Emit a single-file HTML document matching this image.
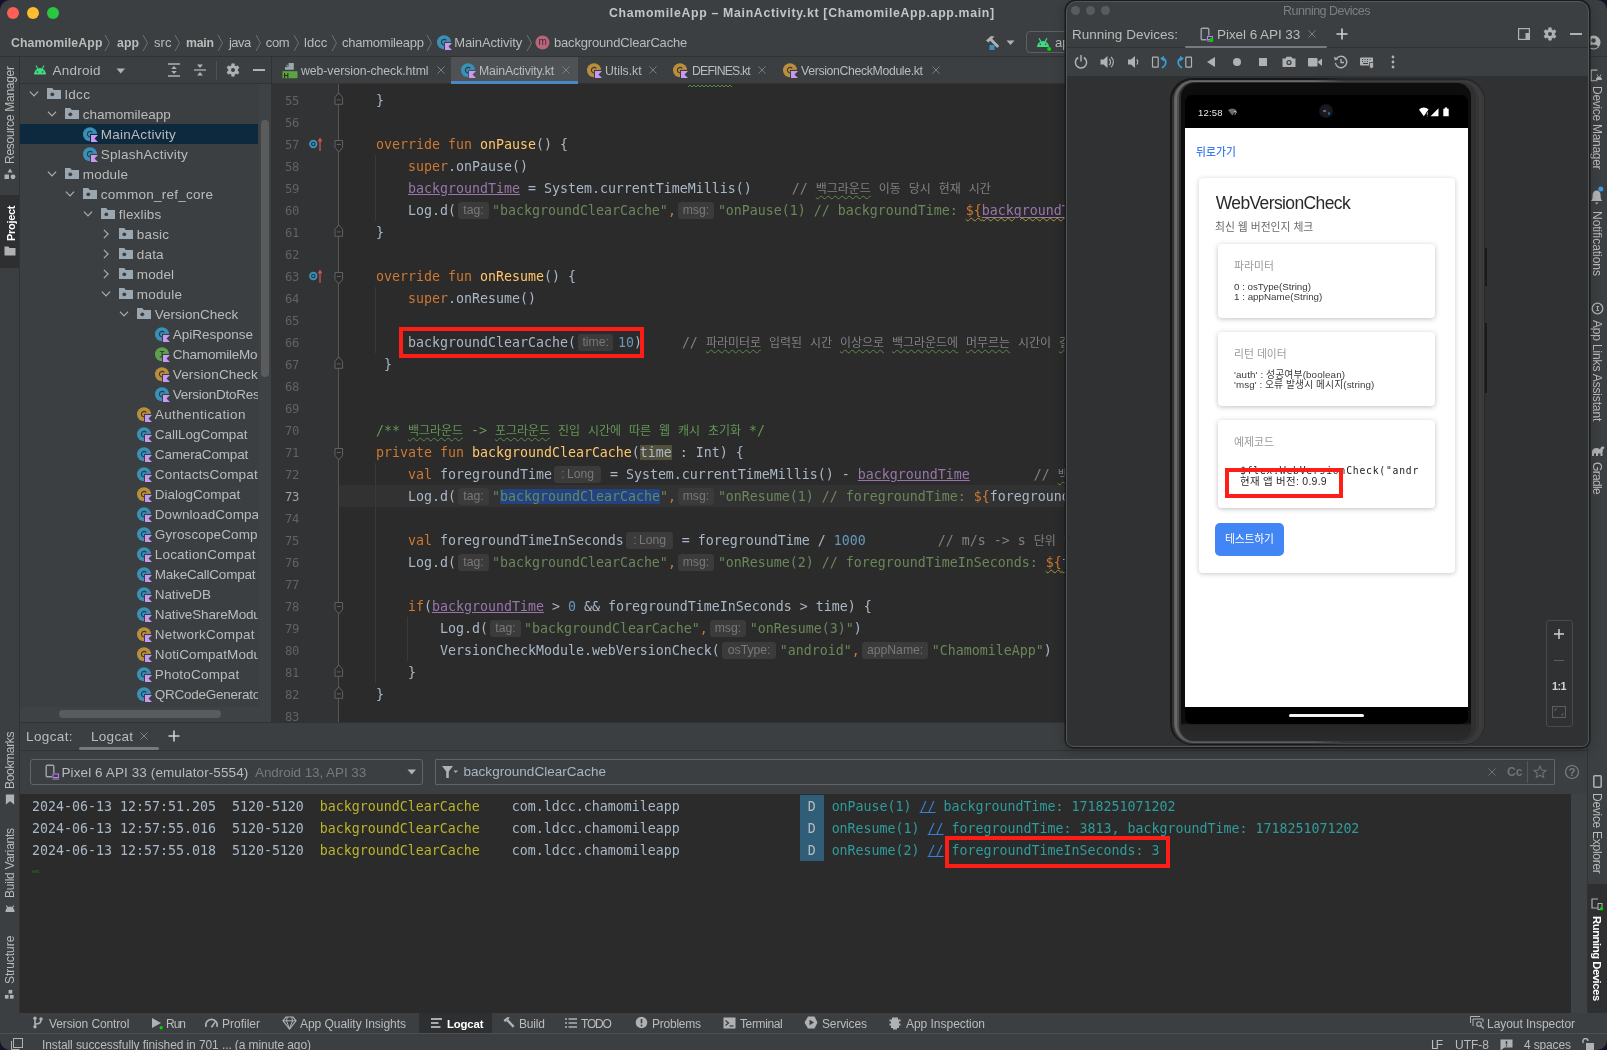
<!DOCTYPE html><html><head><meta charset="utf-8"><title>ChamomileApp</title><style>
*{box-sizing:border-box}
html,body{margin:0;padding:0}
body{width:1607px;height:1050px;overflow:hidden;background:#3c3f41;position:relative;font-family:"Liberation Sans","Noto Sans CJK KR",sans-serif;font-size:13px;color:#bbbbbb;-webkit-font-smoothing:antialiased}
.a{position:absolute}
.t{position:absolute;white-space:nowrap;line-height:16px}
.mono{font-family:"Liberation Mono","Noto Sans CJK KR",monospace}
.vt{position:absolute;white-space:nowrap;transform-origin:0 0;font-size:12px;line-height:14px}
.cl{position:absolute;left:0;white-space:pre;height:22px;line-height:22px;font-family:"DejaVu Sans Mono","Liberation Mono","Noto Sans CJK KR",monospace;font-size:13.29px;color:#a9b7c6;letter-spacing:0px}
.ln{position:absolute;width:27px;text-align:right;left:272px;height:22px;line-height:22px;font-family:"DejaVu Sans Mono","Liberation Mono",monospace;font-size:12.200px;color:#606366;letter-spacing:-0.350px}
.k{color:#cc7832}.s{color:#6a8759}.n{color:#6897bb}.f{color:#ffc66d}.c{color:#808080}.d{color:#629755}.p{color:#9876aa;text-decoration:underline}
.ko{font-size:12px;letter-spacing:-0.04px}
.h{display:inline-block;background:#3b3b3b;color:#787878;font-family:"Liberation Sans",sans-serif;font-size:12.200px;height:17px;line-height:17px;border-radius:3px;padding:0 4px;vertical-align:1px;letter-spacing:0;text-align:center}
.sq{text-decoration:underline wavy #5a8a4a;text-decoration-thickness:1px;text-underline-offset:2px}
.sqy{text-decoration:underline wavy #a89a3e;text-decoration-thickness:1px;text-underline-offset:2px}
.tr{position:absolute;white-space:nowrap;line-height:20px;height:20px;font-size:13.5px;color:#bbbbbb}
.lg{position:absolute;white-space:pre;height:22px;line-height:22px;font-family:"DejaVu Sans Mono","Liberation Mono",monospace;font-size:13.29px}
</style></head><body><div id="root" style="position:absolute;left:0;top:0;width:1607px;height:1050px;will-change:transform;overflow:hidden"><svg width="0" height="0" style="position:absolute"><defs><mask id="kmask" maskUnits="userSpaceOnUse" x="0" y="0" width="16" height="16"><rect x="0" y="0" width="16" height="16" fill="#fff"/><rect x="8" y="7.900" width="8" height="8.100" fill="#000"/></mask></defs></svg>
<div class="a" style="left:0;top:0;width:1607px;height:28px;background:#3c3f41"></div>
<div class="a" style="left:7px;top:7px;width:12px;height:12px;border-radius:6px;background:#fe5f57"></div>
<div class="a" style="left:27px;top:7px;width:12px;height:12px;border-radius:6px;background:#febc2e"></div>
<div class="a" style="left:47px;top:7px;width:12px;height:12px;border-radius:6px;background:#28c840"></div>
<div class="t" style="left:609px;top:5px;font-size:12.29px;font-weight:bold;color:#c3c5c6;letter-spacing:0.692px;">ChamomileApp – MainActivity.kt [ChamomileApp.app.main]</div>
<div class="a" style="left:0;top:56px;width:1607px;height:1px;background:#323232"></div>
<div class="t" style="left:11px;top:35px;font-size:12.29px;font-weight:bold;color:#bbbbbb;letter-spacing:0.124px;">ChamomileApp</div>
<svg class="a" style="left:103.5px;top:34px" width="7" height="18" viewBox="0 0 7 18"><path d="M1 1l4.500 8L1 17" fill="none" stroke="#6e7173" stroke-width="1"/></svg>
<div class="t" style="left:117px;top:35px;font-size:12.29px;font-weight:bold;color:#bbbbbb;letter-spacing:0.075px;">app</div>
<svg class="a" style="left:142px;top:34px" width="7" height="18" viewBox="0 0 7 18"><path d="M1 1l4.500 8L1 17" fill="none" stroke="#6e7173" stroke-width="1"/></svg>
<div class="t" style="left:154px;top:35px;font-size:13px;color:#bbbbbb;letter-spacing:0.035px;">src</div>
<svg class="a" style="left:174px;top:34px" width="7" height="18" viewBox="0 0 7 18"><path d="M1 1l4.500 8L1 17" fill="none" stroke="#6e7173" stroke-width="1"/></svg>
<div class="t" style="left:186px;top:35px;font-size:12.29px;font-weight:bold;color:#bbbbbb;letter-spacing:-0.228px;">main</div>
<svg class="a" style="left:217px;top:34px" width="7" height="18" viewBox="0 0 7 18"><path d="M1 1l4.500 8L1 17" fill="none" stroke="#6e7173" stroke-width="1"/></svg>
<div class="t" style="left:229px;top:35px;font-size:13px;color:#bbbbbb;letter-spacing:-0.516px;">java</div>
<svg class="a" style="left:254.5px;top:34px" width="7" height="18" viewBox="0 0 7 18"><path d="M1 1l4.500 8L1 17" fill="none" stroke="#6e7173" stroke-width="1"/></svg>
<div class="t" style="left:265.8px;top:35px;font-size:13px;color:#bbbbbb;letter-spacing:-0.33px;">com</div>
<svg class="a" style="left:292.5px;top:34px" width="7" height="18" viewBox="0 0 7 18"><path d="M1 1l4.500 8L1 17" fill="none" stroke="#6e7173" stroke-width="1"/></svg>
<div class="t" style="left:304px;top:35px;font-size:13px;color:#bbbbbb;letter-spacing:0.061px;">ldcc</div>
<svg class="a" style="left:330.5px;top:34px" width="7" height="18" viewBox="0 0 7 18"><path d="M1 1l4.500 8L1 17" fill="none" stroke="#6e7173" stroke-width="1"/></svg>
<div class="t" style="left:342px;top:35px;font-size:13px;color:#bbbbbb;letter-spacing:-0.231px;">chamomileapp</div>
<svg class="a" style="left:426px;top:34px" width="7" height="18" viewBox="0 0 7 18"><path d="M1 1l4.500 8L1 17" fill="none" stroke="#6e7173" stroke-width="1"/></svg>
<svg class="a" style="left:435.5px;top:34.3px" width="16" height="16" viewBox="0 0 16 16"><g mask="url(#kmask)"><circle cx="8" cy="8.200" r="7" fill="#3a90b6"/><path d="M10.300 6.300A2.800 2.800 0 1 0 10.300 10.100" fill="none" stroke="#1d2f3a" stroke-opacity="0.850" stroke-width="1.150"/></g><path d="M9 8.900h7l-3.500 3.500 3.500 3.500h-7z" fill="#c69af3"/></svg>
<div class="t" style="left:454.3px;top:35px;font-size:13px;letter-spacing:-0.132px;">MainActivity</div>
<svg class="a" style="left:525.5px;top:34px" width="7" height="18" viewBox="0 0 7 18"><path d="M1 1l4.500 8L1 17" fill="none" stroke="#6e7173" stroke-width="1"/></svg>
<svg class="a" style="left:535px;top:35px" width="15" height="15" viewBox="0 0 15 15"><circle cx="7.5" cy="7.5" r="7" fill="#ba647b"/></svg><div class="t" style="left:538.5px;top:34px;font-size:10px;color:#3c3034">m</div>
<div class="t" style="left:554px;top:35px;font-size:13px;letter-spacing:-0.173px;">backgroundClearCache</div>
<svg class="a" style="left:984px;top:34px" width="18" height="18" viewBox="0 0 18 18"><path d="M2 6.500l5-4.500 3.500 .5-2.300 2.200 7 7.300-2 2-7-7.300-1.700 1.800z" fill="#afb1b3"/><rect x="5.500" y="11" width="5" height="5" fill="#3592c4"/></svg>
<svg class="a" style="left:1006px;top:40px" width="9" height="6" viewBox="0 0 9 6"><path d="M0.500 0.500h8L4.500 5z" fill="#afb1b3"/></svg>
<div class="a" style="left:1026px;top:31px;width:80px;height:22px;border:1px solid #5e6060;border-radius:4px"></div>
<svg class="a" style="left:1036px;top:36.500px" width="16" height="14" viewBox="0 0 16 14"><path d="M1 10a6 6 0 0 1 12 0z" fill="#3ddc84"/><path d="M3 1.300l2 3.500M11 1.300l-2 3.500" stroke="#3ddc84" stroke-width="1.300"/><circle cx="4.300" cy="7.300" r="0.700" fill="#3c3f41"/><circle cx="9.700" cy="7.300" r="0.700" fill="#3c3f41"/><circle cx="13.100" cy="11.900" r="2" fill="#00e000"/></svg>
<div class="t" style="left:1055px;top:35px;font-size:13px;">ap</div>
<svg class="a" style="left:1585.800px;top:34.500px" width="15" height="15" viewBox="0 0 15 15"><circle cx="7.500" cy="7.500" r="7" fill="#afb1b3"/><circle cx="7.500" cy="5.500" r="2.300" fill="#3c3f41"/><path d="M2.800 11.500a5.500 4 0 0 1 9.400 0a6.500 6.500 0 0 1-9.400 0z" fill="#3c3f41"/></svg>
<!--NAV_END-->
<div class="a" style="left:0;top:57px;width:20px;height:955.500px;background:#3c3f41;border-right:1px solid #323232"></div>
<div class="a" style="left:0;top:195px;width:19px;height:73px;background:#2d2f30"></div>
<div class="vt" id="v_rm" style="left:3px;top:163.7px;transform:rotate(-90deg);font-size:12px;letter-spacing:-0.27px;color:#bbbbbb;">Resource Manager</div>
<svg class="a" style="left:4px;top:168px" width="12" height="12" viewBox="0 0 12 12"><path d="M6 0.500l2.500 4h-5z" fill="#afb1b3"/><rect x="0.500" y="6.500" width="4.500" height="4.500" fill="#afb1b3"/><circle cx="9" cy="8.800" r="2.400" fill="#afb1b3"/></svg>
<div class="vt" id="v_pr" style="left:3.5px;top:241px;transform:rotate(-90deg);font-size:11px;letter-spacing:-0.299px;color:#ffffff;font-weight:bold;">Project</div>
<svg class="a" style="left:4px;top:245px" width="12" height="12" viewBox="0 0 12 12"><path d="M0.500 1.500h4l1 1.500h6v7.500h-11z" fill="#afb1b3"/></svg>
<div class="vt" id="v_bm" style="left:3px;top:788.5px;transform:rotate(-90deg);font-size:12px;letter-spacing:-0.315px;color:#bbbbbb;">Bookmarks</div>
<svg class="a" style="left:5px;top:793.500px" width="10" height="11" viewBox="0 0 10 12"><path d="M0.500 0.500h9v11l-4.500-3.500-4.500 3.500z" fill="#afb1b3"/></svg>
<div class="vt" id="v_bv" style="left:3px;top:897.5px;transform:rotate(-90deg);font-size:12px;letter-spacing:-0.234px;color:#bbbbbb;">Build Variants</div>
<svg class="a" style="left:4px;top:902px" width="12" height="11" viewBox="0 0 12 12"><path d="M1 11a5 6 0 0 1 10 0z" fill="#afb1b3"/><path d="M2 4l2 3M10 4l-2 3" stroke="#afb1b3" stroke-width="1.200"/></svg>
<div class="vt" id="v_st" style="left:3px;top:983.5px;transform:rotate(-90deg);font-size:12px;letter-spacing:-0.048px;color:#bbbbbb;">Structure</div>
<svg class="a" style="left:4px;top:988.500px" width="11" height="11" viewBox="0 0 12 12"><rect x="5" y="1" width="4" height="4" fill="#afb1b3"/><rect x="1" y="6.500" width="4" height="4" fill="#afb1b3"/><rect x="6.500" y="6.500" width="4" height="4" fill="#afb1b3"/></svg>
<div class="a" style="left:20px;top:57px;width:252px;height:666px;background:#3c3f41"></div>
<svg class="a" style="left:33px;top:64px" width="14" height="12" viewBox="0 0 14 12"><path d="M1 10.500a6 6.500 0 0 1 12 0z" fill="#3ddc84"/><path d="M3 1.500l2 3.500M11 1.500l-2 3.500" stroke="#3ddc84" stroke-width="1.100"/><circle cx="4.500" cy="8" r="0.800" fill="#3c3f41"/><circle cx="9.500" cy="8" r="0.800" fill="#3c3f41"/></svg>
<div class="t" style="left:52.5px;top:62.7px;font-size:13.5px;letter-spacing:0.245px;">Android</div>
<svg class="a" style="left:116px;top:68px" width="10" height="6" viewBox="0 0 10 6"><path d="M0.500 0.500h8.500L4.750 5.500z" fill="#afb1b3"/></svg>
<svg class="a" style="left:167px;top:63px" width="14" height="14" viewBox="0 0 14 14"><path d="M1 1h12M1 13h12" stroke="#afb1b3" stroke-width="1.300"/><path d="M7 3l2.800 3h-5.600zM7 11l2.800-3h-5.600z" fill="#afb1b3"/></svg>
<svg class="a" style="left:193px;top:63px" width="14" height="14" viewBox="0 0 14 14"><path d="M1 7h12" stroke="#afb1b3" stroke-width="1.300"/><path d="M7 5l3-3.500h-6zM7 9l3 3.500h-6z" fill="#afb1b3"/></svg>
<div class="a" style="left:216px;top:61px;width:1px;height:19px;background:#4f5254"></div>
<svg class="a" style="left:226px;top:63px" width="14" height="14" viewBox="0 0 16 16"><path d="M6.36 3.06L6.57 0.94L9.43 0.94L9.64 3.06L11.46 4.12L13.40 3.23L14.83 5.71L13.09 6.95L13.09 9.05L14.83 10.29L13.40 12.77L11.46 11.88L9.64 12.94L9.43 15.06L6.57 15.06L6.36 12.94L4.54 11.88L2.60 12.77L1.17 10.29L2.91 9.05L2.91 6.95L1.17 5.71L2.60 3.23L4.54 4.12z" fill="#afb1b3" stroke="#afb1b3" stroke-width="0.8" stroke-linejoin="round"/><circle cx="8" cy="8" r="2.300" fill="#3c3f41"/></svg>
<div class="a" style="left:253px;top:69px;width:12px;height:2px;background:#afb1b3"></div>
<div class="a" style="left:20px;top:83px;width:252px;height:1px;background:#323232"></div>
<div class="a" id="tree" style="left:20px;top:84px;width:238px;height:623px;overflow:hidden">
<svg class="a" style="left:7.7px;top:4px" width="12" height="12" viewBox="0 0 12 12"><path d="M1.900 3.700L6 7.900l4.100-4.200" fill="none" stroke="#adadad" stroke-width="1.200"/></svg><svg class="a" style="left:26px;top:2px" width="16" height="16" viewBox="0 0 16 16"><path d="M1 2h5.200l1.600 2H15v9H1z" fill="#9aa7b0"/><circle cx="6.300" cy="8.300" r="1.900" fill="#3c3f41"/></svg><div class="tr" id="tr0" style="left:44.8px;top:0.7000000000000028px;letter-spacing:0.398px">ldcc</div>
<svg class="a" style="left:25.7px;top:24px" width="12" height="12" viewBox="0 0 12 12"><path d="M1.900 3.700L6 7.900l4.100-4.200" fill="none" stroke="#adadad" stroke-width="1.200"/></svg><svg class="a" style="left:44px;top:22px" width="16" height="16" viewBox="0 0 16 16"><path d="M1 2h5.200l1.600 2H15v9H1z" fill="#9aa7b0"/><circle cx="6.300" cy="8.300" r="1.900" fill="#3c3f41"/></svg><div class="tr" id="tr1" style="left:62.8px;top:20.700000000000003px;letter-spacing:0.009px">chamomileapp</div>
<div class="a" style="left:0;top:40px;width:238px;height:20px;background:#0d293e"></div><svg class="a" style="left:62px;top:42px" width="16" height="16" viewBox="0 0 16 16"><g mask="url(#kmask)"><circle cx="8" cy="8.200" r="7" fill="#3a90b6"/><path d="M10.300 6.300A2.800 2.800 0 1 0 10.300 10.100" fill="none" stroke="#1d2f3a" stroke-opacity="0.850" stroke-width="1.150"/></g><path d="M9 8.900h7l-3.500 3.500 3.500 3.500h-7z" fill="#c69af3"/></svg><div class="tr" id="tr2" style="left:80.8px;top:40.7px;letter-spacing:0.262px">MainActivity</div>
<svg class="a" style="left:62px;top:62px" width="16" height="16" viewBox="0 0 16 16"><g mask="url(#kmask)"><circle cx="8" cy="8.200" r="7" fill="#3a90b6"/><path d="M10.300 6.300A2.800 2.800 0 1 0 10.300 10.100" fill="none" stroke="#1d2f3a" stroke-opacity="0.850" stroke-width="1.150"/></g><path d="M9 8.900h7l-3.500 3.500 3.500 3.500h-7z" fill="#c69af3"/></svg><div class="tr" id="tr3" style="left:80.8px;top:60.69999999999999px;letter-spacing:0.228px">SplashActivity</div>
<svg class="a" style="left:25.7px;top:84px" width="12" height="12" viewBox="0 0 12 12"><path d="M1.900 3.700L6 7.900l4.100-4.200" fill="none" stroke="#adadad" stroke-width="1.200"/></svg><svg class="a" style="left:44px;top:82px" width="16" height="16" viewBox="0 0 16 16"><path d="M1 2h5.200l1.600 2H15v9H1z" fill="#9aa7b0"/><circle cx="6.300" cy="8.300" r="1.900" fill="#3c3f41"/></svg><div class="tr" id="tr4" style="left:62.8px;top:80.69999999999999px;letter-spacing:0.185px">module</div>
<svg class="a" style="left:43.7px;top:104px" width="12" height="12" viewBox="0 0 12 12"><path d="M1.900 3.700L6 7.900l4.100-4.200" fill="none" stroke="#adadad" stroke-width="1.200"/></svg><svg class="a" style="left:62px;top:102px" width="16" height="16" viewBox="0 0 16 16"><path d="M1 2h5.200l1.600 2H15v9H1z" fill="#9aa7b0"/><circle cx="6.300" cy="8.300" r="1.900" fill="#3c3f41"/></svg><div class="tr" id="tr5" style="left:80.8px;top:100.69999999999999px;letter-spacing:0.243px">common_ref_core</div>
<svg class="a" style="left:61.7px;top:124px" width="12" height="12" viewBox="0 0 12 12"><path d="M1.900 3.700L6 7.900l4.100-4.200" fill="none" stroke="#adadad" stroke-width="1.200"/></svg><svg class="a" style="left:80px;top:122px" width="16" height="16" viewBox="0 0 16 16"><path d="M1 2h5.200l1.600 2H15v9H1z" fill="#9aa7b0"/><circle cx="6.300" cy="8.300" r="1.900" fill="#3c3f41"/></svg><div class="tr" id="tr6" style="left:98.8px;top:120.69999999999999px;letter-spacing:0.176px">flexlibs</div>
<svg class="a" style="left:79.7px;top:144px" width="12" height="12" viewBox="0 0 12 12"><path d="M3.900 1.900L8.100 6l-4.200 4.100" fill="none" stroke="#adadad" stroke-width="1.200"/></svg><svg class="a" style="left:98px;top:142px" width="16" height="16" viewBox="0 0 16 16"><path d="M1 2h5.200l1.600 2H15v9H1z" fill="#9aa7b0"/><circle cx="6.300" cy="8.300" r="1.900" fill="#3c3f41"/></svg><div class="tr" id="tr7" style="left:116.8px;top:140.7px;letter-spacing:0.171px">basic</div>
<svg class="a" style="left:79.7px;top:164px" width="12" height="12" viewBox="0 0 12 12"><path d="M3.900 1.900L8.100 6l-4.200 4.100" fill="none" stroke="#adadad" stroke-width="1.200"/></svg><svg class="a" style="left:98px;top:162px" width="16" height="16" viewBox="0 0 16 16"><path d="M1 2h5.200l1.600 2H15v9H1z" fill="#9aa7b0"/><circle cx="6.300" cy="8.300" r="1.900" fill="#3c3f41"/></svg><div class="tr" id="tr8" style="left:116.8px;top:160.7px;letter-spacing:0.175px">data</div>
<svg class="a" style="left:79.7px;top:184px" width="12" height="12" viewBox="0 0 12 12"><path d="M3.900 1.900L8.100 6l-4.200 4.100" fill="none" stroke="#adadad" stroke-width="1.200"/></svg><svg class="a" style="left:98px;top:182px" width="16" height="16" viewBox="0 0 16 16"><path d="M1 2h5.200l1.600 2H15v9H1z" fill="#9aa7b0"/><circle cx="6.300" cy="8.300" r="1.900" fill="#3c3f41"/></svg><div class="tr" id="tr9" style="left:116.8px;top:180.7px;letter-spacing:0.108px">model</div>
<svg class="a" style="left:79.7px;top:204px" width="12" height="12" viewBox="0 0 12 12"><path d="M1.900 3.700L6 7.900l4.100-4.200" fill="none" stroke="#adadad" stroke-width="1.200"/></svg><svg class="a" style="left:98px;top:202px" width="16" height="16" viewBox="0 0 16 16"><path d="M1 2h5.200l1.600 2H15v9H1z" fill="#9aa7b0"/><circle cx="6.300" cy="8.300" r="1.900" fill="#3c3f41"/></svg><div class="tr" id="tr10" style="left:116.8px;top:200.7px;letter-spacing:0.185px">module</div>
<svg class="a" style="left:97.7px;top:224px" width="12" height="12" viewBox="0 0 12 12"><path d="M1.900 3.700L6 7.900l4.100-4.200" fill="none" stroke="#adadad" stroke-width="1.200"/></svg><svg class="a" style="left:116px;top:222px" width="16" height="16" viewBox="0 0 16 16"><path d="M1 2h5.200l1.600 2H15v9H1z" fill="#9aa7b0"/><circle cx="6.300" cy="8.300" r="1.900" fill="#3c3f41"/></svg><div class="tr" id="tr11" style="left:134.8px;top:220.7px;letter-spacing:0.015px">VersionCheck</div>
<svg class="a" style="left:134px;top:242px" width="16" height="16" viewBox="0 0 16 16"><g mask="url(#kmask)"><circle cx="8" cy="8.200" r="7" fill="#3a90b6"/><path d="M10.300 6.300A2.800 2.800 0 1 0 10.300 10.100" fill="none" stroke="#1d2f3a" stroke-opacity="0.850" stroke-width="1.150"/></g><path d="M9 8.900h7l-3.500 3.500 3.500 3.500h-7z" fill="#c69af3"/></svg><div class="tr" id="tr12" style="left:152.8px;top:240.7px;letter-spacing:-0.01px">ApiResponse</div>
<svg class="a" style="left:134px;top:262px" width="16" height="16" viewBox="0 0 16 16"><g mask="url(#kmask)"><circle cx="8" cy="8.200" r="7" fill="#5fa04e"/><path d="M5.800 5.500h4.400M8 5.500v5.500M5.800 11h4.400" fill="none" stroke="#1d3a1d" stroke-opacity="0.850" stroke-width="1.150"/></g><path d="M9 8.900h7l-3.500 3.500 3.500 3.500h-7z" fill="#c69af3"/></svg><div class="tr" id="tr13" style="left:152.8px;top:260.7px;letter-spacing:-0.232px">ChamomileModule</div>
<svg class="a" style="left:134px;top:282px" width="16" height="16" viewBox="0 0 16 16"><g mask="url(#kmask)"><circle cx="8" cy="8.200" r="7" fill="#bd8e3a"/><path d="M10.300 6.300A2.800 2.800 0 1 0 10.300 10.100" fill="none" stroke="#1d2f3a" stroke-opacity="0.850" stroke-width="1.150"/></g><path d="M9 8.900h7l-3.500 3.500 3.500 3.500h-7z" fill="#c69af3"/></svg><div class="tr" id="tr14" style="left:152.8px;top:280.7px;letter-spacing:0.151px">VersionCheckModule</div>
<svg class="a" style="left:134px;top:302px" width="16" height="16" viewBox="0 0 16 16"><g mask="url(#kmask)"><circle cx="8" cy="8.200" r="7" fill="#3a90b6"/><path d="M10.300 6.300A2.800 2.800 0 1 0 10.300 10.100" fill="none" stroke="#1d2f3a" stroke-opacity="0.850" stroke-width="1.150"/></g><path d="M9 8.900h7l-3.500 3.500 3.500 3.500h-7z" fill="#c69af3"/></svg><div class="tr" id="tr15" style="left:152.8px;top:300.7px;letter-spacing:-0.258px">VersionDtoResponse</div>
<svg class="a" style="left:116px;top:322px" width="16" height="16" viewBox="0 0 16 16"><g mask="url(#kmask)"><circle cx="8" cy="8.200" r="7" fill="#bd8e3a"/><path d="M10.300 6.300A2.800 2.800 0 1 0 10.300 10.100" fill="none" stroke="#1d2f3a" stroke-opacity="0.850" stroke-width="1.150"/></g><path d="M9 8.900h7l-3.500 3.500 3.500 3.500h-7z" fill="#c69af3"/></svg><div class="tr" id="tr16" style="left:134.8px;top:320.7px;letter-spacing:0.388px">Authentication</div>
<svg class="a" style="left:116px;top:342px" width="16" height="16" viewBox="0 0 16 16"><g mask="url(#kmask)"><circle cx="8" cy="8.200" r="7" fill="#3a90b6"/><path d="M10.300 6.300A2.800 2.800 0 1 0 10.300 10.100" fill="none" stroke="#1d2f3a" stroke-opacity="0.850" stroke-width="1.150"/></g><path d="M9 8.900h7l-3.500 3.500 3.500 3.500h-7z" fill="#c69af3"/></svg><div class="tr" id="tr17" style="left:134.8px;top:340.7px;letter-spacing:-0.021px">CallLogCompat</div>
<svg class="a" style="left:116px;top:362px" width="16" height="16" viewBox="0 0 16 16"><g mask="url(#kmask)"><circle cx="8" cy="8.200" r="7" fill="#3a90b6"/><path d="M10.300 6.300A2.800 2.800 0 1 0 10.300 10.100" fill="none" stroke="#1d2f3a" stroke-opacity="0.850" stroke-width="1.150"/></g><path d="M9 8.900h7l-3.500 3.500 3.500 3.500h-7z" fill="#c69af3"/></svg><div class="tr" id="tr18" style="left:134.8px;top:360.7px;letter-spacing:-0.162px">CameraCompat</div>
<svg class="a" style="left:116px;top:382px" width="16" height="16" viewBox="0 0 16 16"><g mask="url(#kmask)"><circle cx="8" cy="8.200" r="7" fill="#3a90b6"/><path d="M10.300 6.300A2.800 2.800 0 1 0 10.300 10.100" fill="none" stroke="#1d2f3a" stroke-opacity="0.850" stroke-width="1.150"/></g><path d="M9 8.900h7l-3.500 3.500 3.500 3.500h-7z" fill="#c69af3"/></svg><div class="tr" id="tr19" style="left:134.8px;top:380.7px;letter-spacing:0.181px">ContactsCompat</div>
<svg class="a" style="left:116px;top:402px" width="16" height="16" viewBox="0 0 16 16"><g mask="url(#kmask)"><circle cx="8" cy="8.200" r="7" fill="#bd8e3a"/><path d="M10.300 6.300A2.800 2.800 0 1 0 10.300 10.100" fill="none" stroke="#1d2f3a" stroke-opacity="0.850" stroke-width="1.150"/></g><path d="M9 8.900h7l-3.500 3.500 3.500 3.500h-7z" fill="#c69af3"/></svg><div class="tr" id="tr20" style="left:134.8px;top:400.7px;letter-spacing:-0.004px">DialogCompat</div>
<svg class="a" style="left:116px;top:422px" width="16" height="16" viewBox="0 0 16 16"><g mask="url(#kmask)"><circle cx="8" cy="8.200" r="7" fill="#3a90b6"/><path d="M10.300 6.300A2.800 2.800 0 1 0 10.300 10.100" fill="none" stroke="#1d2f3a" stroke-opacity="0.850" stroke-width="1.150"/></g><path d="M9 8.900h7l-3.500 3.500 3.500 3.500h-7z" fill="#c69af3"/></svg><div class="tr" id="tr21" style="left:134.8px;top:420.7px;letter-spacing:0.054px">DownloadCompat</div>
<svg class="a" style="left:116px;top:442px" width="16" height="16" viewBox="0 0 16 16"><g mask="url(#kmask)"><circle cx="8" cy="8.200" r="7" fill="#3a90b6"/><path d="M10.300 6.300A2.800 2.800 0 1 0 10.300 10.100" fill="none" stroke="#1d2f3a" stroke-opacity="0.850" stroke-width="1.150"/></g><path d="M9 8.900h7l-3.500 3.500 3.500 3.500h-7z" fill="#c69af3"/></svg><div class="tr" id="tr22" style="left:134.8px;top:440.70000000000005px;letter-spacing:0.118px">GyroscopeCompat</div>
<svg class="a" style="left:116px;top:462px" width="16" height="16" viewBox="0 0 16 16"><g mask="url(#kmask)"><circle cx="8" cy="8.200" r="7" fill="#3a90b6"/><path d="M10.300 6.300A2.800 2.800 0 1 0 10.300 10.100" fill="none" stroke="#1d2f3a" stroke-opacity="0.850" stroke-width="1.150"/></g><path d="M9 8.900h7l-3.500 3.500 3.500 3.500h-7z" fill="#c69af3"/></svg><div class="tr" id="tr23" style="left:134.8px;top:460.70000000000005px;letter-spacing:0.184px">LocationCompat</div>
<svg class="a" style="left:116px;top:482px" width="16" height="16" viewBox="0 0 16 16"><g mask="url(#kmask)"><circle cx="8" cy="8.200" r="7" fill="#3a90b6"/><path d="M10.300 6.300A2.800 2.800 0 1 0 10.300 10.100" fill="none" stroke="#1d2f3a" stroke-opacity="0.850" stroke-width="1.150"/></g><path d="M9 8.900h7l-3.500 3.500 3.500 3.500h-7z" fill="#c69af3"/></svg><div class="tr" id="tr24" style="left:134.8px;top:480.70000000000005px;letter-spacing:-0.218px">MakeCallCompat</div>
<svg class="a" style="left:116px;top:502px" width="16" height="16" viewBox="0 0 16 16"><g mask="url(#kmask)"><circle cx="8" cy="8.200" r="7" fill="#3a90b6"/><path d="M10.300 6.300A2.800 2.800 0 1 0 10.300 10.100" fill="none" stroke="#1d2f3a" stroke-opacity="0.850" stroke-width="1.150"/></g><path d="M9 8.900h7l-3.500 3.500 3.500 3.500h-7z" fill="#c69af3"/></svg><div class="tr" id="tr25" style="left:134.8px;top:500.70000000000005px;letter-spacing:-0.117px">NativeDB</div>
<svg class="a" style="left:116px;top:522px" width="16" height="16" viewBox="0 0 16 16"><g mask="url(#kmask)"><circle cx="8" cy="8.200" r="7" fill="#3a90b6"/><path d="M10.300 6.300A2.800 2.800 0 1 0 10.300 10.100" fill="none" stroke="#1d2f3a" stroke-opacity="0.850" stroke-width="1.150"/></g><path d="M9 8.900h7l-3.500 3.500 3.500 3.500h-7z" fill="#c69af3"/></svg><div class="tr" id="tr26" style="left:134.8px;top:520.7px;letter-spacing:-0.142px">NativeShareModule</div>
<svg class="a" style="left:116px;top:542px" width="16" height="16" viewBox="0 0 16 16"><g mask="url(#kmask)"><circle cx="8" cy="8.200" r="7" fill="#bd8e3a"/><path d="M10.300 6.300A2.800 2.800 0 1 0 10.300 10.100" fill="none" stroke="#1d2f3a" stroke-opacity="0.850" stroke-width="1.150"/></g><path d="M9 8.900h7l-3.500 3.500 3.500 3.500h-7z" fill="#c69af3"/></svg><div class="tr" id="tr27" style="left:134.8px;top:540.7px;letter-spacing:0.235px">NetworkCompat</div>
<svg class="a" style="left:116px;top:562px" width="16" height="16" viewBox="0 0 16 16"><g mask="url(#kmask)"><circle cx="8" cy="8.200" r="7" fill="#bd8e3a"/><path d="M10.300 6.300A2.800 2.800 0 1 0 10.300 10.100" fill="none" stroke="#1d2f3a" stroke-opacity="0.850" stroke-width="1.150"/></g><path d="M9 8.900h7l-3.500 3.500 3.500 3.500h-7z" fill="#c69af3"/></svg><div class="tr" id="tr28" style="left:134.8px;top:560.7px;letter-spacing:0.097px">NotiCompatModule</div>
<svg class="a" style="left:116px;top:582px" width="16" height="16" viewBox="0 0 16 16"><g mask="url(#kmask)"><circle cx="8" cy="8.200" r="7" fill="#3a90b6"/><path d="M10.300 6.300A2.800 2.800 0 1 0 10.300 10.100" fill="none" stroke="#1d2f3a" stroke-opacity="0.850" stroke-width="1.150"/></g><path d="M9 8.900h7l-3.500 3.500 3.500 3.500h-7z" fill="#c69af3"/></svg><div class="tr" id="tr29" style="left:134.8px;top:580.7px;letter-spacing:0.185px">PhotoCompat</div>
<svg class="a" style="left:116px;top:602px" width="16" height="16" viewBox="0 0 16 16"><g mask="url(#kmask)"><circle cx="8" cy="8.200" r="7" fill="#3a90b6"/><path d="M10.300 6.300A2.800 2.800 0 1 0 10.300 10.100" fill="none" stroke="#1d2f3a" stroke-opacity="0.850" stroke-width="1.150"/></g><path d="M9 8.900h7l-3.500 3.500 3.500 3.500h-7z" fill="#c69af3"/></svg><div class="tr" id="tr30" style="left:134.8px;top:600.7px;letter-spacing:-0.259px">QRCodeGenerator</div>
<svg class="a" style="left:116px;top:622px" width="16" height="16" viewBox="0 0 16 16"><g mask="url(#kmask)"><circle cx="8" cy="8.200" r="7" fill="#3a90b6"/><path d="M10.300 6.300A2.800 2.800 0 1 0 10.300 10.100" fill="none" stroke="#1d2f3a" stroke-opacity="0.850" stroke-width="1.150"/></g><path d="M9 8.900h7l-3.500 3.500 3.500 3.500h-7z" fill="#c69af3"/></svg><div class="tr" id="tr31" style="left:134.8px;top:620.7px;letter-spacing:0.1px">QRCodeScanner</div>
</div>
<div class="a" style="left:259px;top:84px;width:12px;height:623px;background:#3f4244"></div>
<div class="a" style="left:261px;top:120px;width:8px;height:257px;border-radius:4px;background:#595b5d"></div>
<div class="a" style="left:20px;top:707px;width:252px;height:16px;background:#3f4244"></div>
<div class="a" style="left:59px;top:710px;width:162px;height:8px;border-radius:4px;background:#595b5d"></div>
<div class="a" style="left:271px;top:57px;width:1px;height:666px;background:#323232"></div>
<!--PROJ_END-->
<div class="a" id="editor" style="left:272px;top:57px;width:1335px;height:666px;background:#2b2b2b;overflow:hidden"></div>
<div class="a" style="left:272px;top:57px;width:1335px;height:27px;background:#3c3f41;border-bottom:1px solid #323232"></div>
<div class="a" style="left:451px;top:57px;width:127px;height:26px;background:#4e5254"></div>
<div class="a" style="left:451px;top:80.500px;width:127px;height:3.500px;background:#4a88c7"></div>
<svg class="a" style="left:281.500px;top:62px" width="16" height="17" viewBox="0 0 16 17"><path d="M3 7.800V4.600h1.600V2.800h1.600V1h5.600v6.800z" fill="#9aa7b0"/><path d="M6.200 1v3.600H3" fill="none" stroke="#3c3f41" stroke-width="0.700"/><rect x="0.500" y="9.200" width="15" height="7" fill="#62b543" fill-opacity="0.850"/></svg><div class="t" style="left:283.500px;top:72px;font-size:7.500px;font-weight:bold;color:#1f3314;line-height:7px">H</div>
<div class="t" style="left:301px;top:62.5px;font-size:12.3px;letter-spacing:-0.076px;">web-version-check.html</div>
<svg class="a" style="left:436.5px;top:66px" width="8" height="8" viewBox="0 0 8 8"><path d="M0.500 0.500l7 7M7.500 0.500l-7 7" stroke="#7c7f81" stroke-width="1"/></svg>
<svg class="a" style="left:459.5px;top:62px" width="16" height="16" viewBox="0 0 16 16"><g mask="url(#kmask)"><circle cx="8" cy="8.200" r="7" fill="#3a90b6"/><path d="M10.300 6.300A2.800 2.800 0 1 0 10.300 10.100" fill="none" stroke="#1d2f3a" stroke-opacity="0.850" stroke-width="1.150"/></g><path d="M9 8.900h7l-3.500 3.500 3.500 3.500h-7z" fill="#c69af3"/></svg>
<div class="t" style="left:479px;top:62.5px;font-size:12.3px;letter-spacing:-0.186px;">MainActivity.kt</div>
<svg class="a" style="left:562px;top:66px" width="8" height="8" viewBox="0 0 8 8"><path d="M0.500 0.500l7 7M7.500 0.500l-7 7" stroke="#7c7f81" stroke-width="1"/></svg>
<svg class="a" style="left:585.5px;top:62px" width="16" height="16" viewBox="0 0 16 16"><g mask="url(#kmask)"><circle cx="8" cy="8.200" r="7" fill="#bd8e3a"/><path d="M10.300 6.300A2.800 2.800 0 1 0 10.300 10.100" fill="none" stroke="#1d2f3a" stroke-opacity="0.850" stroke-width="1.150"/></g><path d="M9 8.900h7l-3.500 3.500 3.500 3.500h-7z" fill="#c69af3"/></svg>
<div class="t" style="left:605px;top:62.5px;font-size:12.3px;letter-spacing:-0.043px;">Utils.kt</div>
<svg class="a" style="left:649px;top:66px" width="8" height="8" viewBox="0 0 8 8"><path d="M0.500 0.500l7 7M7.500 0.500l-7 7" stroke="#7c7f81" stroke-width="1"/></svg>
<svg class="a" style="left:672px;top:62px" width="16" height="16" viewBox="0 0 16 16"><g mask="url(#kmask)"><circle cx="8" cy="8.200" r="7" fill="#bd8e3a"/><path d="M10.300 6.300A2.800 2.800 0 1 0 10.300 10.100" fill="none" stroke="#1d2f3a" stroke-opacity="0.850" stroke-width="1.150"/></g><path d="M9 8.900h7l-3.500 3.500 3.500 3.500h-7z" fill="#c69af3"/></svg>
<div class="t" style="left:692px;top:62.5px;font-size:12.3px;letter-spacing:-0.833px;">DEFINES.kt</div>
<svg class="a" style="left:758px;top:66px" width="8" height="8" viewBox="0 0 8 8"><path d="M0.500 0.500l7 7M7.500 0.500l-7 7" stroke="#7c7f81" stroke-width="1"/></svg>
<svg class="a" style="left:781.5px;top:62px" width="16" height="16" viewBox="0 0 16 16"><g mask="url(#kmask)"><circle cx="8" cy="8.200" r="7" fill="#bd8e3a"/><path d="M10.300 6.300A2.800 2.800 0 1 0 10.300 10.100" fill="none" stroke="#1d2f3a" stroke-opacity="0.850" stroke-width="1.150"/></g><path d="M9 8.900h7l-3.500 3.500 3.500 3.500h-7z" fill="#c69af3"/></svg>
<div class="t" style="left:801px;top:62.5px;font-size:12.3px;letter-spacing:-0.36px;">VersionCheckModule.kt</div>
<svg class="a" style="left:932px;top:66px" width="8" height="8" viewBox="0 0 8 8"><path d="M0.500 0.500l7 7M7.500 0.500l-7 7" stroke="#7c7f81" stroke-width="1"/></svg>
<div class="a" style="left:272px;top:84px;width:66px;height:639px;background:#313335"></div>
<div class="a" style="left:338px;top:84px;width:1px;height:639px;background:#555555"></div>
<div class="a" style="left:339px;top:485px;width:1268px;height:22px;background:#323232"></div>
<div class="a" style="left:375px;top:155px;width:1px;height:66px;background:#3a3a3a"></div>
<div class="a" style="left:375px;top:287px;width:1px;height:66px;background:#3a3a3a"></div>
<div class="a" style="left:375px;top:463px;width:1px;height:220px;background:#3a3a3a"></div>
<div class="a" style="left:407px;top:617px;width:1px;height:44px;background:#3a3a3a"></div>
<div class="ln" style="top:90.3px;color:#606366">55</div>
<div class="ln" style="top:112.3px;color:#606366">56</div>
<div class="ln" style="top:134.3px;color:#606366">57</div>
<div class="ln" style="top:156.3px;color:#606366">58</div>
<div class="ln" style="top:178.3px;color:#606366">59</div>
<div class="ln" style="top:200.3px;color:#606366">60</div>
<div class="ln" style="top:222.3px;color:#606366">61</div>
<div class="ln" style="top:244.3px;color:#606366">62</div>
<div class="ln" style="top:266.3px;color:#606366">63</div>
<div class="ln" style="top:288.3px;color:#606366">64</div>
<div class="ln" style="top:310.3px;color:#606366">65</div>
<div class="ln" style="top:332.3px;color:#606366">66</div>
<div class="ln" style="top:354.3px;color:#606366">67</div>
<div class="ln" style="top:376.3px;color:#606366">68</div>
<div class="ln" style="top:398.3px;color:#606366">69</div>
<div class="ln" style="top:420.3px;color:#606366">70</div>
<div class="ln" style="top:442.3px;color:#606366">71</div>
<div class="ln" style="top:464.3px;color:#606366">72</div>
<div class="ln" style="top:486.3px;color:#a4a3a3">73</div>
<div class="ln" style="top:508.3px;color:#606366">74</div>
<div class="ln" style="top:530.3px;color:#606366">75</div>
<div class="ln" style="top:552.3px;color:#606366">76</div>
<div class="ln" style="top:574.3px;color:#606366">77</div>
<div class="ln" style="top:596.3px;color:#606366">78</div>
<div class="ln" style="top:618.3px;color:#606366">79</div>
<div class="ln" style="top:640.3px;color:#606366">80</div>
<div class="ln" style="top:662.3px;color:#606366">81</div>
<div class="ln" style="top:684.3px;color:#606366">82</div>
<div class="ln" style="top:706.3px;color:#606366">83</div>
<svg class="a" style="left:333.500px;top:91.7px" width="10" height="13" viewBox="0 0 10 13"><path d="M1 12.300h7.600V5.400l-3.800-4.500-3.800 4.500z" fill="#2b2b2b" stroke="#606366" stroke-width="1"/><path d="M2.800 7.900h4" stroke="#606366" stroke-width="1"/></svg>
<svg class="a" style="left:333.500px;top:139.9px" width="10" height="13" viewBox="0 0 10 13"><path d="M1 0.500h7.600v6.900l-3.800 4.500-3.800-4.500z" fill="#2b2b2b" stroke="#606366" stroke-width="1"/><path d="M2.800 4.500h4" stroke="#606366" stroke-width="1"/></svg>
<svg class="a" style="left:333.500px;top:223.7px" width="10" height="13" viewBox="0 0 10 13"><path d="M1 12.300h7.600V5.400l-3.800-4.500-3.800 4.500z" fill="#2b2b2b" stroke="#606366" stroke-width="1"/><path d="M2.800 7.900h4" stroke="#606366" stroke-width="1"/></svg>
<svg class="a" style="left:333.500px;top:271.9px" width="10" height="13" viewBox="0 0 10 13"><path d="M1 0.500h7.600v6.900l-3.800 4.500-3.800-4.500z" fill="#2b2b2b" stroke="#606366" stroke-width="1"/><path d="M2.800 4.500h4" stroke="#606366" stroke-width="1"/></svg>
<svg class="a" style="left:333.500px;top:355.7px" width="10" height="13" viewBox="0 0 10 13"><path d="M1 12.300h7.600V5.400l-3.800-4.500-3.800 4.500z" fill="#2b2b2b" stroke="#606366" stroke-width="1"/><path d="M2.800 7.900h4" stroke="#606366" stroke-width="1"/></svg>
<svg class="a" style="left:333.500px;top:447.9px" width="10" height="13" viewBox="0 0 10 13"><path d="M1 0.500h7.600v6.900l-3.800 4.500-3.800-4.500z" fill="#2b2b2b" stroke="#606366" stroke-width="1"/><path d="M2.800 4.500h4" stroke="#606366" stroke-width="1"/></svg>
<svg class="a" style="left:333.500px;top:601.9px" width="10" height="13" viewBox="0 0 10 13"><path d="M1 0.500h7.600v6.900l-3.800 4.500-3.800-4.500z" fill="#2b2b2b" stroke="#606366" stroke-width="1"/><path d="M2.800 4.500h4" stroke="#606366" stroke-width="1"/></svg>
<svg class="a" style="left:333.500px;top:663.7px" width="10" height="13" viewBox="0 0 10 13"><path d="M1 12.300h7.600V5.400l-3.800-4.500-3.800 4.500z" fill="#2b2b2b" stroke="#606366" stroke-width="1"/><path d="M2.800 7.900h4" stroke="#606366" stroke-width="1"/></svg>
<svg class="a" style="left:333.500px;top:685.7px" width="10" height="13" viewBox="0 0 10 13"><path d="M1 12.300h7.600V5.400l-3.800-4.500-3.800 4.500z" fill="#2b2b2b" stroke="#606366" stroke-width="1"/><path d="M2.800 7.900h4" stroke="#606366" stroke-width="1"/></svg>
<svg class="a" style="left:308px;top:137px" width="14" height="14" viewBox="0 0 14 14"><circle cx="5.300" cy="7" r="4.200" fill="#3a90b6"/><circle cx="5.300" cy="7" r="1.700" fill="none" stroke="#24343c" stroke-width="1.100"/><path d="M12 14V3" stroke="#d25252" stroke-width="1.300"/><path d="M9.500 4.600L12 0.500l2.500 4.100z" fill="#d25252"/></svg>
<svg class="a" style="left:308px;top:269px" width="14" height="14" viewBox="0 0 14 14"><circle cx="5.300" cy="7" r="4.200" fill="#3a90b6"/><circle cx="5.300" cy="7" r="1.700" fill="none" stroke="#24343c" stroke-width="1.100"/><path d="M12 14V3" stroke="#d25252" stroke-width="1.300"/><path d="M9.500 4.600L12 0.500l2.500 4.100z" fill="#d25252"/></svg>
<div class="a" id="code" style="left:344px;top:0;width:1263px;height:723px;overflow:hidden;clip-path:inset(84px 0 0 0)">
<div class="cl" id="L55" style="top:90.2px">    }</div>
<div class="cl" id="L57" style="top:134.2px">    <span class="k">override fun </span><span class="f">onPause</span>() {</div>
<div class="cl" id="L58" style="top:156.2px">        <span class="k">super</span>.onPause()</div>
<div class="cl" id="L59" style="top:178.2px">        <span class="p">backgroundTime</span> = System.currentTimeMillis()     <span class="c">// <span class="sq"><span class="ko">백그라운드</span></span> <span class="ko">이동</span> <span class="ko">당시</span> <span class="ko">현재</span> <span class="ko">시간</span></span></div>
<div class="cl" id="L60" style="top:200.2px">        Log.d(<span class="h" style="width:31px;margin:0 3px 0 2px;padding:0">tag:</span><span class="s">&quot;backgroundClearCache&quot;</span><span class="k">,</span><span class="h" style="width:36px;margin:0 4px 0 2px;padding:0">msg:</span><span class="s">&quot;onPause(1) // backgroundTime: </span><span class="sqy"><span class="k">${</span><span class="p">backgroundTime</span><span class="k">}</span></span><span class="s">&quot;</span>)</div>
<div class="cl" id="L61" style="top:222.2px">    }</div>
<div class="cl" id="L63" style="top:266.2px">    <span class="k">override fun </span><span class="f">onResume</span>() {</div>
<div class="cl" id="L64" style="top:288.2px">        <span class="k">super</span>.onResume()</div>
<div class="cl" id="L66" style="top:332.2px">        backgroundClearCache(<span class="h" style="width:35.5px;margin:0 4.5px 0 2px;padding:0">time:</span><span class="n">10</span>)     <span class="c">// <span class="sq"><span class="ko">파라미터로</span></span> <span class="ko">입력된</span> <span class="ko">시간</span> <span class="sq"><span class="ko">이상으로</span></span> <span class="sq"><span class="ko">백그라운드에</span></span> <span class="sq"><span class="ko">머무르는</span></span> <span class="ko">시간이</span> <span class="sq"><span class="ko">길어지면</span></span></span></div>
<div class="cl" id="L67" style="top:354.2px">     }</div>
<div class="cl" id="L70" style="top:420.2px">    <span class="d">/** <span class="sq"><span class="ko">백그라운드</span></span> -&gt; <span class="sq"><span class="ko">포그라운드</span></span> <span class="ko">진입</span> <span class="ko">시간에</span> <span class="ko">따른</span> <span class="ko">웹</span> <span class="ko">캐시</span> <span class="ko">초기화</span> */</span></div>
<div class="cl" id="L71" style="top:442.2px">    <span class="k">private fun </span><span class="f">backgroundClearCache</span>(<span style="background:#52503a">time</span> : Int) {</div>
<div class="cl" id="L72" style="top:464.2px">        <span class="k">val </span>foregroundTime<span class="h" style="width:47.5px;margin:0 0.5px 0 2px;padding:0">:&#8201;Long</span> = System.currentTimeMillis() - <span class="p">backgroundTime</span>        <span class="c">// <span class="sq"><span class="ko">백그라운드</span></span></span></div>
<div class="cl" id="L73" style="top:486.2px">        Log.d(<span class="h" style="width:31px;margin:0 3px 0 2px;padding:0">tag:</span><span class="s">&quot;<span style="background:#214283">backgroundClearCache</span>&quot;</span><span class="k">,</span><span class="h" style="width:36px;margin:0 4px 0 2px;padding:0">msg:</span><span class="s">&quot;onResume(1) // foregroundTime: </span><span class="k">${</span>foregroundTime<span class="k">}</span><span class="s">, backgroundTime</span></div>
<div class="cl" id="L75" style="top:530.2px">        <span class="k">val </span>foregroundTimeInSeconds<span class="h" style="width:47.5px;margin:0 0.5px 0 2px;padding:0">:&#8201;Long</span> = foregroundTime / <span class="n">1000</span>         <span class="c">// m/s -&gt; s <span class="ko">단위</span> <span class="ko">변환</span></span></div>
<div class="cl" id="L76" style="top:552.2px">        Log.d(<span class="h" style="width:31px;margin:0 3px 0 2px;padding:0">tag:</span><span class="s">&quot;backgroundClearCache&quot;</span><span class="k">,</span><span class="h" style="width:36px;margin:0 4px 0 2px;padding:0">msg:</span><span class="s">&quot;onResume(2) // foregroundTimeInSeconds: </span><span class="sqy"><span class="k">${</span>foregroundTimeInSeconds<span class="k">}</span></span><span class="s">&quot;</span>)</div>
<div class="cl" id="L78" style="top:596.2px">        <span class="k">if</span>(<span class="p">backgroundTime</span> &gt; <span class="n">0</span> &amp;&amp; foregroundTimeInSeconds &gt; time) {</div>
<div class="cl" id="L79" style="top:618.2px">            Log.d(<span class="h" style="width:31px;margin:0 3px 0 2px;padding:0">tag:</span><span class="s">&quot;backgroundClearCache&quot;</span><span class="k">,</span><span class="h" style="width:36px;margin:0 4px 0 2px;padding:0">msg:</span><span class="s">&quot;onResume(3)&quot;</span>)</div>
<div class="cl" id="L80" style="top:640.2px">            VersionCheckModule.webVersionCheck(<span class="h" style="width:54.6px;margin:0 3.4px 0 2px;padding:0">osType:</span><span class="s">&quot;android&quot;</span><span class="k">,</span><span class="h" style="width:66.7px;margin:0 3.3px 0 2px;padding:0">appName:</span><span class="s">&quot;ChamomileApp&quot;</span>)</div>
<div class="cl" id="L81" style="top:662.2px">        }</div>
<div class="cl" id="L82" style="top:684.2px">    }</div>
</div>
<svg class="a" style="left:688px;top:84px" width="45" height="4" viewBox="0 0 45 4"><path d="M0 3l2-2 2 2 2-2 2 2 2-2 2 2 2-2 2 2 2-2 2 2 2-2 2 2 2-2 2 2 2-2 2 2 2-2 2 2 2-2 2 2 2-2 2 2" fill="none" stroke="#5a8a4a" stroke-width="1"/></svg>
<div class="a" style="left:399px;top:327px;width:245px;height:31px;border:4px solid #fc1e17"></div>
<!--EDITOR_END-->
<div class="a" style="left:20px;top:723px;width:1587px;height:290px;background:#3c3f41"></div>
<div class="a" style="left:20px;top:722px;width:1587px;height:1px;background:#323232"></div>
<div class="t" style="left:26px;top:729.3px;font-size:13.5px;letter-spacing:0.369px;">Logcat:</div>
<div class="t" style="left:91px;top:729.3px;font-size:13.5px;letter-spacing:0.293px;">Logcat</div>
<svg class="a" style="left:140px;top:732px" width="8" height="8" viewBox="0 0 8 8"><path d="M0.500 0.500l7 7M7.500 0.500l-7 7" stroke="#7c7f81" stroke-width="1"/></svg>
<div class="a" style="left:79px;top:747px;width:80px;height:3px;border-radius:1.500px;background:#747a80"></div>
<svg class="a" style="left:168px;top:730px" width="12" height="12" viewBox="0 0 12 12"><path d="M6 0.500v11M0.500 6h11" stroke="#d0d0d0" stroke-width="1.600"/></svg>
<div class="a" style="left:20px;top:750px;width:1567px;height:1px;background:#323232"></div>
<div class="a" style="left:29.500px;top:759px;width:393.500px;height:26px;border:1px solid #646464;border-radius:3px"></div>
<svg class="a" style="left:45px;top:764px" width="15" height="16" viewBox="0 0 15 16"><rect x="1.200" y="1.200" width="7.600" height="11.600" rx="1.200" fill="none" stroke="#9aa7b0" stroke-width="1.400"/><rect x="7" y="9" width="7" height="5" fill="#3c3f41"/><rect x="8" y="10" width="5.500" height="3.500" fill="none" stroke="#b583e8" stroke-width="1"/><path d="M7.500 15h6.500" stroke="#b583e8" stroke-width="1"/></svg>
<div class="t" style="left:61.5px;top:765px;font-size:13.5px;color:#bbbbbb;letter-spacing:0.1px;">Pixel 6 API 33 (emulator-5554)</div>
<div class="t" style="left:255px;top:765px;font-size:13.5px;color:#787878;letter-spacing:-0.078px;">Android 13, API 33</div>
<svg class="a" style="left:407px;top:769px" width="10" height="6" viewBox="0 0 10 6"><path d="M0.500 0.500h8.500L4.750 5.500z" fill="#afb1b3"/></svg>
<div class="a" style="left:435px;top:759px;width:1119.500px;height:26px;border:1px solid #646464;border-radius:1px"></div>
<svg class="a" style="left:441px;top:765px" width="18" height="14" viewBox="0 0 18 14"><path d="M1 1h11L7.800 6.500V13H5.200V6.500z" fill="#afb1b3"/><path d="M12.500 5.500h4.500l-2.250 2.500z" fill="#afb1b3"/></svg>
<div class="t" style="left:463.5px;top:763.9px;font-size:13.5px;color:#a9b7c6;letter-spacing:0.035px;">backgroundClearCache</div>
<svg class="a" style="left:1488px;top:768px" width="8" height="8" viewBox="0 0 8 8"><path d="M0.500 0.500l7 7M7.500 0.500l-7 7" stroke="#6e7173" stroke-width="1"/></svg>
<div class="t" style="left:1507px;top:764px;font-size:12.29px;font-weight:bold;color:#6e7173;letter-spacing:-0.211px;">Cc</div>
<div class="a" style="left:1527px;top:761px;width:1px;height:22px;background:#555759"></div>
<svg class="a" style="left:1533px;top:765px" width="14" height="14" viewBox="0 0 14 14"><path d="M7 1.200l1.700 3.900 4.200.4-3.200 2.800 1 4.100L7 10.200l-3.700 2.200 1-4.100L1.100 5.500l4.200-.4z" fill="none" stroke="#6e7173" stroke-width="1.100"/></svg>
<svg class="a" style="left:1564px;top:764px" width="16" height="16" viewBox="0 0 16 16"><circle cx="8" cy="8" r="6.500" fill="none" stroke="#7c7f81" stroke-width="1.200"/></svg><div class="t" style="left:1568.800px;top:764.500px;font-size:11px;font-weight:bold;color:#7c7f81;line-height:15px">?</div>
<div class="a" style="left:20px;top:794px;width:1551px;height:218.500px;background:#2b2b2b"></div>
<div class="a" style="left:1571px;top:794px;width:16px;height:218.500px;background:#3f4244"></div>
<div class="a" style="left:800px;top:795px;width:24px;height:22px;background:#305d78"></div>
<div class="lg" style="left:32px;top:795.7px;color:#a9b7c6">2024-06-13 12:57:51.205  5120-5120  <span style="color:#bbb529">backgroundClearCache</span>    com.ldcc.chamomileapp                <span style="color:#bbbbbb">D</span>  <span style="color:#2f9c9c">onPause(1) <span style="color:#3a7fd5;text-decoration:underline">//</span> backgroundTime: 1718251071202</span></div>
<div class="a" style="left:800px;top:817px;width:24px;height:22px;background:#305d78"></div>
<div class="lg" style="left:32px;top:817.7px;color:#a9b7c6">2024-06-13 12:57:55.016  5120-5120  <span style="color:#bbb529">backgroundClearCache</span>    com.ldcc.chamomileapp                <span style="color:#bbbbbb">D</span>  <span style="color:#2f9c9c">onResume(1) <span style="color:#3a7fd5;text-decoration:underline">//</span> foregroundTime: 3813, backgroundTime: 1718251071202</span></div>
<div class="a" style="left:800px;top:839px;width:24px;height:22px;background:#305d78"></div>
<div class="lg" style="left:32px;top:839.7px;color:#a9b7c6">2024-06-13 12:57:55.018  5120-5120  <span style="color:#bbb529">backgroundClearCache</span>    com.ldcc.chamomileapp                <span style="color:#bbbbbb">D</span>  <span style="color:#2f9c9c">onResume(2) <span style="color:#3a7fd5;text-decoration:underline">//</span> foregroundTimeInSeconds: 3</span></div>
<div class="t" style="left:32px;top:866px;font-size:5px;line-height:10px;color:#1e7a1e">esc</div>
<div class="a" style="left:945px;top:836px;width:224.500px;height:32px;border:4px solid #fc1e17"></div>
<div class="a" style="left:0;top:1012.500px;width:1607px;height:21px;background:#3c3f41"></div>
<div class="a" style="left:419px;top:1012.500px;width:73px;height:20.500px;background:#2d2f30"></div>
<svg class="a" style="left:32px;top:1016px" width="12" height="13" viewBox="0 0 12 13"><path d="M3 1v11M3 8c5 0 6-1.500 6-5" fill="none" stroke="#afb1b3" stroke-width="1.600"/><circle cx="3" cy="2.200" r="1.700" fill="#afb1b3"/><circle cx="3" cy="10.800" r="1.700" fill="#afb1b3"/><circle cx="9" cy="3" r="1.700" fill="#afb1b3"/></svg>
<div class="t" style="left:49px;top:1015.6px;font-size:12px;letter-spacing:-0.122px;">Version Control</div>
<svg class="a" style="left:150.500px;top:1017.300px" width="13" height="13" viewBox="0 0 13 13"><path d="M1 1l9 5-9 5z" fill="#afb1b3"/><circle cx="10.200" cy="10.700" r="1.700" fill="#00d300"/></svg>
<div class="t" style="left:166px;top:1015.6px;font-size:12px;letter-spacing:-1.007px;">Run</div>
<svg class="a" style="left:204px;top:1017px" width="15" height="11" viewBox="0 0 15 11"><path d="M2 10A5.800 5.800 0 1 1 13 10" fill="none" stroke="#afb1b3" stroke-width="1.700"/><path d="M6.500 10l4.500-6 1 .7-3.500 5.800z" fill="#afb1b3"/></svg>
<div class="t" style="left:222px;top:1015.6px;font-size:12px;letter-spacing:-0.001px;">Profiler</div>
<svg class="a" style="left:282px;top:1016px" width="15" height="14" viewBox="0 0 15 14"><path d="M4 1h7l3 3.800L7.500 13 1 4.800z" fill="none" stroke="#afb1b3" stroke-width="1.200"/><path d="M1 4.800h13M5.300 1L4.500 4.800l3 8M9.700 1l.8 3.800-3 8" fill="none" stroke="#afb1b3" stroke-width="1"/></svg>
<div class="t" style="left:300px;top:1015.6px;font-size:12px;letter-spacing:-0.038px;">App Quality Insights</div>
<svg class="a" style="left:431px;top:1018px" width="12" height="10" viewBox="0 0 12 10"><path d="M0 1h11M0 5h7.500M0 9h9.500" stroke="#d5d5d5" stroke-width="1.500"/></svg>
<div class="t" style="left:447px;top:1015.6px;font-size:11.34px;font-weight:bold;color:#ffffff;letter-spacing:-0.134px;">Logcat</div>
<svg class="a" style="left:502px;top:1016px" width="14" height="13" viewBox="0 0 14 13"><path d="M1.500 4l4-3 2.500 .5-1.800 1.800 6.300 6.700-1.700 1.700-6.300-6.700-1.300 1.200z" fill="#afb1b3"/></svg>
<div class="t" style="left:519px;top:1015.6px;font-size:12px;letter-spacing:-0.171px;">Build</div>
<svg class="a" style="left:565px;top:1018px" width="12" height="10" viewBox="0 0 12 10"><path d="M3.500 1h8.500M3.500 5h8.500M3.500 9h8.500" stroke="#afb1b3" stroke-width="1.500"/><path d="M0 1h2M0 5h2M0 9h2" stroke="#afb1b3" stroke-width="1.500"/></svg>
<div class="t" style="left:581px;top:1015.6px;font-size:12px;letter-spacing:-1.221px;">TODO</div>
<svg class="a" style="left:635px;top:1016px" width="13" height="13" viewBox="0 0 13 13"><circle cx="6.500" cy="6.500" r="5.800" fill="#afb1b3"/><path d="M6.500 3v4.300" stroke="#3c3f41" stroke-width="1.600"/><circle cx="6.500" cy="9.500" r="0.900" fill="#3c3f41"/></svg>
<div class="t" style="left:652px;top:1015.6px;font-size:12px;letter-spacing:-0.241px;">Problems</div>
<svg class="a" style="left:723px;top:1017px" width="13" height="12" viewBox="0 0 13 12"><rect x="0.500" y="0.500" width="12" height="11" fill="#afb1b3"/><path d="M2.500 3.500l3 2.500-3 2.500" fill="none" stroke="#3c3f41" stroke-width="1.300"/><path d="M6.500 9h4" stroke="#3c3f41" stroke-width="1.300"/></svg>
<div class="t" style="left:740px;top:1015.6px;font-size:12px;letter-spacing:-0.382px;">Terminal</div>
<svg class="a" style="left:804px;top:1016px" width="14" height="13" viewBox="0 0 14 13"><path d="M4 0.500h6.500L13.500 6.500 10.500 12.500H4L0.500 6.500z" fill="#afb1b3"/><path d="M5.500 3.800l4.500 2.700-4.500 2.700z" fill="#3c3f41"/></svg>
<div class="t" style="left:822px;top:1015.6px;font-size:12px;letter-spacing:-0.145px;">Services</div>
<svg class="a" style="left:888px;top:1016px" width="14" height="14" viewBox="0 0 14 14"><path d="M4 1.500h6v2h2.500v2H11v2h1.500v2H11V12H9v1.500H5V12H3V9.500H1.500v-2H3v-2H1.500v-2H4z" fill="#afb1b3"/></svg>
<div class="t" style="left:906px;top:1015.6px;font-size:12px;letter-spacing:-0.03px;">App Inspection</div>
<svg class="a" style="left:1470px;top:1016px" width="15" height="13" viewBox="0 0 15 13"><path d="M0.500 7V0.500h9.500" fill="none" stroke="#afb1b3" stroke-width="1"/><path d="M3 10V3h10v3" fill="none" stroke="#afb1b3" stroke-width="1"/><circle cx="9" cy="8" r="2.300" fill="none" stroke="#afb1b3" stroke-width="1.100"/><path d="M10.800 9.800l3 2.700" stroke="#afb1b3" stroke-width="1.300"/></svg>
<div class="t" style="left:1487px;top:1015.6px;font-size:12px;letter-spacing:-0.048px;">Layout Inspector</div>
<div class="a" style="left:0;top:1033px;width:1607px;height:17px;background:#3c3f41;border-top:1px solid #4d5052"></div>
<svg class="a" style="left:10px;top:1038px" width="14" height="12" viewBox="0 0 14 12"><rect x="3.500" y="0.500" width="9" height="9" fill="none" stroke="#afb1b3" stroke-width="1"/><path d="M1.500 3v8.500h8" fill="none" stroke="#afb1b3" stroke-width="1"/></svg>
<div class="t" style="left:42px;top:1036.7px;font-size:12px;letter-spacing:-0.095px;">Install successfully finished in 701 ... (a minute ago)</div>
<div class="t" style="left:1431px;top:1036.7px;font-size:12px;letter-spacing:-2.004px;">LF</div>
<div class="t" style="left:1455px;top:1036.7px;font-size:12px;letter-spacing:0.001px;">UTF-8</div>
<svg class="a" style="left:1500px;top:1039px" width="13" height="11" viewBox="0 0 13 11"><path d="M0.500 0.500h12v8h-8l-4 3z" fill="#afb1b3"/><path d="M6.500 2v3.500" stroke="#3c3f41" stroke-width="1.500"/><circle cx="6.500" cy="7" r="0.800" fill="#3c3f41"/></svg>
<div class="t" style="left:1524px;top:1036.7px;font-size:12px;letter-spacing:-0.147px;">4 spaces</div>
<svg class="a" style="left:1581px;top:1038px" width="14" height="12" viewBox="0 0 14 12"><path d="M2 5V3a2.500 2.500 0 0 1 5 0" fill="none" stroke="#afb1b3" stroke-width="1.400"/><rect x="5" y="5" width="8" height="7" fill="#afb1b3"/></svg>
<div class="a" style="left:1587px;top:57px;width:20px;height:955.500px;background:#3c3f41;border-left:1px solid #323232"></div>
<div class="a" style="left:1588px;top:884px;width:19px;height:128.500px;background:#2d2f30"></div>
<div class="vt" style="left:1603.500px;top:86.2px;transform:rotate(90deg);font-size:12px;letter-spacing:-0.29px;color:#bbbbbb;">Device Manager</div>
<svg class="a" style="left:1590px;top:69px" width="12" height="13" viewBox="0 0 13 14"><path d="M8 1.200H1.200v11.500H8" fill="none" stroke="#afb1b3" stroke-width="1.300"/><path d="M6.500 12a3.200 4 0 0 1 6.400 0z" fill="#afb1b3"/><path d="M7.500 6l1.200 2M12 6l-1.200 2" stroke="#afb1b3" stroke-width="1"/></svg>
<div class="vt" style="left:1603.500px;top:210.7px;transform:rotate(90deg);font-size:12px;letter-spacing:-0.03px;color:#bbbbbb;">Notifications</div>
<svg class="a" style="left:1590px;top:186px" width="14" height="20" viewBox="0 0 14 20"><path d="M1 15c1.600-1.300 1.600-3.500 1.600-6a4 4.500 0 0 1 8 0c0 2.500 0 4.700 1.600 6z" fill="#afb1b3"/><path d="M5 16.500h3.500l-1.750 2z" fill="#afb1b3"/><circle cx="10.800" cy="3" r="2.500" fill="#3d99e0"/></svg>
<div class="vt" style="left:1603.500px;top:319.8px;transform:rotate(90deg);font-size:12px;letter-spacing:-0.157px;color:#bbbbbb;">App Links Assistant</div>
<svg class="a" style="left:1590.500px;top:302.300px" width="13" height="13" viewBox="0 0 13 13"><circle cx="6.500" cy="6.500" r="5.300" fill="none" stroke="#afb1b3" stroke-width="1.300"/><path d="M5.500 4.500h2.500M5.500 8.500h2.500M6.500 4.500v4" stroke="#afb1b3" stroke-width="1.100" fill="none"/></svg>
<div class="vt" style="left:1603.500px;top:462px;transform:rotate(90deg);font-size:12px;letter-spacing:-0.644px;color:#bbbbbb;">Gradle</div>
<svg class="a" style="left:1589.500px;top:443.500px" width="15" height="13" viewBox="0 0 15 13"><path d="M2 12V8c0-2.500 2-4 4.500-4 1.500 0 2.500.5 3.500 1.500.5-2 1.500-3 3-3 .8 0 1.300.5 1.300 1.300S13.500 5 12.800 5c.3 1 .2 2-.3 3v4h-2V9.500H8V12H6V9.500H4V12z" fill="#afb1b3"/></svg>
<div class="vt" style="left:1603.500px;top:792.9px;transform:rotate(90deg);font-size:12px;letter-spacing:-0.278px;color:#bbbbbb;">Device Explorer</div>
<svg class="a" style="left:1593px;top:775px" width="9" height="13" viewBox="0 0 9 13"><rect x="0.800" y="0.800" width="7.400" height="11.400" rx="1" fill="none" stroke="#afb1b3" stroke-width="1.500"/></svg>
<div class="vt" style="left:1603.500px;top:915.7px;transform:rotate(90deg);font-size:11.3px;letter-spacing:-0.462px;color:#ffffff;font-weight:bold;">Running Devices</div>
<svg class="a" style="left:1591px;top:898px" width="13" height="13" viewBox="0 0 13 13"><path d="M7 1H1v9h6" fill="none" stroke="#afb1b3" stroke-width="1.200"/><rect x="7" y="5.500" width="4" height="6" fill="none" stroke="#afb1b3" stroke-width="1"/><circle cx="10.500" cy="10.800" r="1.800" fill="#00d300"/></svg>
<!--BOTTOM_END-->
<div class="a" id="emu" style="left:1066px;top:1px;width:523px;height:746px;background:#3c3f41;border-radius:10px 10px 7px 7px;box-shadow:0 0 0 1.500px #1a1b1c, 0 3px 12px rgba(0,0,0,0.300);overflow:hidden">
<div class="a" style="left:0;top:0;width:523px;height:746px;border-radius:10px 10px 7px 7px;border:1px solid #54575a;pointer-events:none;z-index:5"></div>
<div class="a" style="left:5.0px;top:4.800000000000001px;width:9px;height:9px;border-radius:5px;background:#595b5d"></div>
<div class="a" style="left:20.0px;top:4.800000000000001px;width:9px;height:9px;border-radius:5px;background:#595b5d"></div>
<div class="a" style="left:35.0px;top:4.800000000000001px;width:9px;height:9px;border-radius:5px;background:#595b5d"></div>
<div class="t" style="left:217px;top:2px;font-size:12.5px;color:#7d7f81;letter-spacing:-0.5px;">Running Devices</div>
<div class="t" style="left:6px;top:25.5px;font-size:13.5px;letter-spacing:0.013px;">Running Devices:</div>
<svg class="a" style="left:134px;top:26.3px" width="15" height="16" viewBox="0 0 15 16"><rect x="1.200" y="1.200" width="7.600" height="11.600" rx="1.200" fill="none" stroke="#9aa7b0" stroke-width="1.400"/><rect x="6.500" y="8.500" width="7" height="6" fill="#3c3f41"/><rect x="7.500" y="9.500" width="5" height="3" fill="none" stroke="#b583e8" stroke-width="1"/><path d="M7 14h6" stroke="#b583e8" stroke-width="1"/><circle cx="11.500" cy="13" r="2" fill="#00d300"/></svg>
<div class="t" style="left:151px;top:25.5px;font-size:13.5px;letter-spacing:-0.061px;">Pixel 6 API 33</div>
<svg class="a" style="left:242px;top:29px" width="8" height="8" viewBox="0 0 8 8"><path d="M0.500 0.500l7 7M7.500 0.500l-7 7" stroke="#7c7f81" stroke-width="1"/></svg>
<svg class="a" style="left:270px;top:27.3px" width="12" height="12" viewBox="0 0 12 12"><path d="M6 0.500v11M0.500 6h11" stroke="#d0d0d0" stroke-width="1.600"/></svg>
<svg class="a" style="left:452px;top:27px" width="12" height="12" viewBox="0 0 12 12"><rect x="0.600" y="0.600" width="10.800" height="10.800" fill="none" stroke="#afb1b3" stroke-width="1.200"/><rect x="7.500" y="5" width="4" height="6.500" fill="#afb1b3"/></svg>
<svg class="a" style="left:477px;top:26px" width="14" height="14" viewBox="0 0 16 16"><path d="M6.36 3.06L6.57 0.94L9.43 0.94L9.64 3.06L11.46 4.12L13.40 3.23L14.83 5.71L13.09 6.95L13.09 9.05L14.83 10.29L13.40 12.77L11.46 11.88L9.64 12.94L9.43 15.06L6.57 15.06L6.36 12.94L4.54 11.88L2.60 12.77L1.17 10.29L2.91 9.05L2.91 6.95L1.17 5.71L2.60 3.23L4.54 4.12z" fill="#afb1b3" stroke="#afb1b3" stroke-width="0.8" stroke-linejoin="round"/><circle cx="8" cy="8" r="2.300" fill="#3c3f41"/></svg>
<div class="a" style="left:504px;top:32px;width:12px;height:2px;background:#afb1b3"></div>
<div class="a" style="left:0;top:46px;width:523px;height:1px;background:#323232"></div>
<div class="a" style="left:119px;top:44.5px;width:142px;height:2.500px;border-radius:1.300px;background:#747a80"></div>
<svg class="a" style="left:7.0px;top:53.0px" width="16" height="16" viewBox="0 0 16 16"><path d="M5.200 3.500A5.600 5.600 0 1 0 10.800 3.500" fill="none" stroke="#afb1b3" stroke-width="1.500"/><path d="M8 1v6.500" stroke="#afb1b3" stroke-width="1.500"/></svg>
<svg class="a" style="left:33.0px;top:53.0px" width="16" height="16" viewBox="0 0 16 16"><path d="M1.500 5.500h3l4-3.500v12l-4-3.500h-3z" fill="#afb1b3"/><path d="M10.200 5a4 4 0 0 1 0 6M12 3a6.500 6.500 0 0 1 0 10" fill="none" stroke="#afb1b3" stroke-width="1.200"/></svg>
<svg class="a" style="left:59.0px;top:53.0px" width="16" height="16" viewBox="0 0 16 16"><path d="M3 5.500h3l4-3.500v12l-4-3.500h-3z" fill="#afb1b3"/><path d="M11.700 5.500a3.500 3.500 0 0 1 0 5" fill="none" stroke="#afb1b3" stroke-width="1.200"/></svg>
<svg class="a" style="left:84.0px;top:53.0px" width="18" height="16" viewBox="0 0 18 16"><rect x="2.500" y="3.100" width="5.700" height="10.100" rx="0.600" fill="none" stroke="#afb1b3" stroke-width="1.200"/><path d="M13 4.600C16.800 5.200 17 11.500 11.800 13.800" fill="none" stroke="#389fd6" stroke-width="1.700"/><path d="M10.200 4.600L14 1.800L14 7.400z" fill="#389fd6"/></svg>
<svg class="a" style="left:110.0px;top:53.0px" width="18" height="16" viewBox="0 0 18 16"><rect x="9.800" y="3.100" width="5.700" height="10.100" rx="0.600" fill="none" stroke="#afb1b3" stroke-width="1.200"/><path d="M5 4.600C1.200 5.200 1 11.500 6.200 13.800" fill="none" stroke="#389fd6" stroke-width="1.700"/><path d="M7.800 4.600L4 1.800L4 7.400z" fill="#389fd6"/></svg>
<svg class="a" style="left:137.0px;top:53.0px" width="16" height="16" viewBox="0 0 16 16"><path d="M12 3v10L4 8z" fill="#afb1b3"/></svg>
<svg class="a" style="left:163.0px;top:53.0px" width="16" height="16" viewBox="0 0 16 16"><circle cx="8" cy="8" r="4" fill="#afb1b3"/></svg>
<svg class="a" style="left:189.0px;top:53.0px" width="16" height="16" viewBox="0 0 16 16"><rect x="4" y="4" width="8" height="8" fill="#afb1b3"/></svg>
<svg class="a" style="left:215.0px;top:53.0px" width="16" height="16" viewBox="0 0 16 16"><path d="M1.500 4.500h3l1-1.800h5l1 1.800h3v8.500h-13z" fill="#afb1b3"/><circle cx="8" cy="8.500" r="2.600" fill="#3c3f41"/><circle cx="8" cy="8.500" r="1.300" fill="#afb1b3"/></svg>
<svg class="a" style="left:241.0px;top:53.0px" width="16" height="16" viewBox="0 0 16 16"><rect x="1" y="4" width="9.500" height="8.500" rx="1" fill="#afb1b3"/><path d="M10.500 8l4.500-3.500v7.500z" fill="#afb1b3"/></svg>
<svg class="a" style="left:267.0px;top:53.0px" width="16" height="16" viewBox="0 0 16 16"><path d="M3.500 4.500A5.700 5.700 0 1 1 2.400 9" fill="none" stroke="#afb1b3" stroke-width="1.400"/><path d="M1 2.500l.8 4 3.700-1.300z" fill="#afb1b3"/><path d="M8 5v3.500h3" fill="none" stroke="#afb1b3" stroke-width="1.300"/></svg>
<svg class="a" style="left:293.0px;top:53.0px" width="16" height="16" viewBox="0 0 16 16"><rect x="1" y="3.500" width="13" height="8" rx="1" fill="#afb1b3"/><path d="M3 5.500h1M5.500 5.500h1M8 5.500h1M10.500 5.500h1M3 7.500h1M5.500 7.500h1M8 7.500h1M4 9.500h5" stroke="#3c3f41" stroke-width="1"/><path d="M10.500 8.500v4a2 2 0 0 0 4 0v-4z" fill="#afb1b3" stroke="#3c3f41" stroke-width="0.800"/></svg>
<svg class="a" style="left:319.0px;top:53.0px" width="16" height="16" viewBox="0 0 16 16"><circle cx="8" cy="3" r="1.400" fill="#afb1b3"/><circle cx="8" cy="8" r="1.400" fill="#afb1b3"/><circle cx="8" cy="13" r="1.400" fill="#afb1b3"/></svg>
<div class="a" style="left:0;top:75px;width:523px;height:672px;background:#2f3133"></div>
<div class="a" style="left:103.5px;top:77px;width:315.5px;height:667px;border-radius:22px;background:linear-gradient(to right,#171717 0,#171717 45%,#262626 55%,#262626 100%)"></div>
<div class="a" style="left:106.0px;top:78.5px;width:311.8px;height:664.5px;border-radius:20.5px;background:linear-gradient(to right,#333333 0,#333333 45%,#424242 55%,#424242 100%)"></div>
<div class="a" style="left:107.5px;top:79.2px;width:309.0px;height:663.0px;border-radius:19.5px;background:linear-gradient(to right,#5c5c5c 0,#5c5c5c 45%,#343434 55%,#343434 100%)"></div>
<div class="a" style="left:109.0px;top:79.8px;width:306.5px;height:661.7px;border-radius:18.5px;background:linear-gradient(to right,#6a6a6a 0,#6a6a6a 45%,#3d3d3d 55%,#3d3d3d 100%)"></div>
<div class="a" style="left:111.0px;top:80.5px;width:302.0px;height:660.3px;border-radius:17px;background:linear-gradient(to right,#4e4e4e 0,#4e4e4e 45%,#363636 55%,#363636 100%)"></div>
<div class="a" style="left:113.0px;top:81.3px;width:297.0px;height:658.7px;border-radius:15.5px;background:linear-gradient(to right,#2a2a2a 0,#2a2a2a 45%,#303030 55%,#303030 100%)"></div>
<div class="a" style="left:114.79999999999995px;top:82.2px;width:290.70000000000005px;height:657.8px;border-radius:14px 14px 13px 13px;background:linear-gradient(to bottom,#0d0d0d 0,#0d0d0d 640px,#262626 642px,#2b2b2b 100%)"></div>
<div class="a" style="left:419px;top:247px;width:2px;height:38px;background:#1a1a1a"></div>
<div class="a" style="left:419px;top:322px;width:2px;height:70px;background:#1a1a1a"></div>
<div class="a" id="screen" style="left:119px;top:94px;width:283px;height:629px;border-radius:7px;background:#000;overflow:hidden;font-family:'Liberation Sans','Noto Sans CJK KR',sans-serif">
<div class="a" style="left:0;top:33px;width:283px;height:579px;background:#ffffff"></div>
<div class="t" style="left:13px;top:9.5px;font-size:9.5px;color:#e8e8e8;letter-spacing:0.182px;">12:58</div>
<svg class="a" style="left:42.5px;top:13px" width="9" height="8" viewBox="0 0 9 8"><path d="M0 2a6.500 6.500 0 0 1 8.500 0L4.250 7.500z" fill="#6a6a6a"/></svg><div class="t" style="left:48.5px;top:14.5px;font-size:5.500px;line-height:6px;color:#dddddd;font-weight:bold">?</div>
<div class="a" style="left:134.29999999999995px;top:9.299999999999997px;width:14px;height:14px;border-radius:7px;background:radial-gradient(circle at 50% 50%,#1d2128 0,#16181d 55%,#0d0e10 100%)"></div><div class="a" style="left:137.5px;top:14.5px;width:3px;height:2px;border-radius:1px;background:#8a9aa0;opacity:0.700"></div><div class="a" style="left:142.5px;top:16.5px;width:2px;height:3px;border-radius:1px;background:#2f5f9a"></div>
<svg class="a" style="left:233.5px;top:12px" width="32" height="10" viewBox="0 0 32 10"><path d="M0 2.400a7.200 7.200 0 0 1 9.600 0L4.800 9.200z" fill="#fff"/><path d="M8.300 5v3M8.300 8.600v0.800" stroke="#000" stroke-width="1.600"/><path d="M8.300 5.300v2.500M8.300 8.700v0.600" stroke="#fff" stroke-width="0.800"/><path d="M11.500 9.200h8v-8z" fill="#fff"/><path d="M24.300 1.700h1.500v-1.300h2.400v1.300h1.500v7.500h-5.400z" fill="#fff"/></svg>
<div class="t" style="left:11px;top:49.7px;line-height:14px;font-family:'Liberation Sans','Noto Sans CJK KR',sans-serif;font-size:10.8px;font-weight:500;color:#3b7ded;letter-spacing:0.089px">뒤로가기</div>
<div class="a" style="left:14px;top:83px;width:256px;height:394.500px;border-radius:4px;background:#fff;box-shadow:0 1px 5px rgba(0,0,0,0.22)"></div>
<div class="t" style="left:30.700000000000045px;top:100.7px;line-height:14px;font-family:'Liberation Sans','Noto Sans CJK KR',sans-serif;font-size:17.5px;font-weight:400;color:#2a2a2a;letter-spacing:-0.617px">WebVersionCheck</div>
<div class="t" style="left:30px;top:125.2px;line-height:14px;font-family:'Liberation Sans','Noto Sans CJK KR',sans-serif;font-size:10.8px;font-weight:400;color:#6a6a6a;letter-spacing:-0.01px">최신 웹 버전인지 체크</div>
<div class="a" style="left:33px;top:149px;width:217px;height:74px;border-radius:4px;background:#fff;box-shadow:0 1px 5px rgba(0,0,0,0.25)"></div>
<div class="t" style="left:49px;top:163.8px;line-height:14px;font-family:'Liberation Sans','Noto Sans CJK KR',sans-serif;font-size:10.8px;font-weight:400;color:#9a9a9a;letter-spacing:0.089px">파라미터</div>
<div class="t" style="left:49px;top:184.5px;line-height:14px;font-family:'Liberation Sans','Noto Sans CJK KR',sans-serif;font-size:9.8px;font-weight:400;color:#3a3a3a;letter-spacing:-0.019px">0 : osType(String)</div>
<div class="t" style="left:49px;top:194.5px;line-height:14px;font-family:'Liberation Sans','Noto Sans CJK KR',sans-serif;font-size:9.8px;font-weight:400;color:#3a3a3a;letter-spacing:0.005px">1 : appName(String)</div>
<div class="a" style="left:33px;top:237px;width:217px;height:74px;border-radius:4px;background:#fff;box-shadow:0 1px 5px rgba(0,0,0,0.25)"></div>
<div class="t" style="left:49px;top:252.0px;line-height:14px;font-family:'Liberation Sans','Noto Sans CJK KR',sans-serif;font-size:10.8px;font-weight:400;color:#9a9a9a;letter-spacing:0.006px">리턴 데이터</div>
<div class="t" style="left:49px;top:272.7px;line-height:14px;font-family:'Liberation Sans','Noto Sans CJK KR',sans-serif;font-size:9.8px;font-weight:400;color:#3a3a3a;letter-spacing:0.123px">&#x27;auth&#x27; : 성공여부(boolean)</div>
<div class="t" style="left:49px;top:282.5px;line-height:14px;font-family:'Liberation Sans','Noto Sans CJK KR',sans-serif;font-size:9.8px;font-weight:400;color:#3a3a3a;letter-spacing:0.074px">&#x27;msg&#x27; : 오류 발생시 메시지(string)</div>
<div class="a" style="left:33px;top:325px;width:217px;height:88.30000000000001px;border-radius:4px;background:#fff;box-shadow:0 1px 5px rgba(0,0,0,0.25)"></div>
<div class="t" style="left:49px;top:340.3px;line-height:14px;font-family:'Liberation Sans','Noto Sans CJK KR',sans-serif;font-size:10.8px;font-weight:400;color:#9a9a9a;letter-spacing:0.089px">예제코드</div>
<div class="t" style="left:55px;top:368.7px;line-height:14px;font-family:'DejaVu Sans Mono','Liberation Mono',monospace;font-size:9.7px;font-weight:400;color:#222222;letter-spacing:0.801px">$flex.WebVersionCheck(&quot;andr</div>
<div class="t" style="left:55px;top:378.8px;line-height:14px;font-family:'Liberation Sans','Noto Sans CJK KR',sans-serif;font-size:10.5px;font-weight:400;color:#2a2a2a;letter-spacing:0.259px">현재 앱 버전: 0.9.9</div>
<div class="a" style="left:30px;top:427.70000000000005px;width:69px;height:33.300px;border-radius:5px;background:#4285f4"></div>
<div class="t" style="left:40px;top:436.5px;line-height:14px;font-family:'Liberation Sans','Noto Sans CJK KR',sans-serif;font-size:10.8px;font-weight:400;color:#ffffff;letter-spacing:-0.168px">테스트하기</div>
<div class="a" style="left:40px;top:373px;width:118px;height:30px;border:4px solid #fc1e17"></div>
<div class="a" style="left:104px;top:618.5px;width:75px;height:3px;border-radius:1.500px;background:#f4f4f4"></div>
</div>
<div class="a" style="left:480px;top:618.5px;width:26.500px;height:107px;border:1px solid #484a4c;border-radius:3px"></div>
<svg class="a" style="left:487px;top:627px" width="12" height="12" viewBox="0 0 12 12"><path d="M6 1v10M1 6h10" stroke="#d0d0d0" stroke-width="1.500"/></svg>
<div class="a" style="left:488px;top:658.5px;width:10px;height:1.500px;background:#5c5e60"></div>
<div class="t" style="left:486px;top:677px;font-size:10.87px;font-weight:bold;color:#d4d4d4;letter-spacing:-0.605px;">1:1</div>
<svg class="a" style="left:486px;top:705px" width="14" height="12" viewBox="0 0 14 12"><rect x="0.500" y="0.500" width="13" height="11" fill="none" stroke="#5c5e60" stroke-width="1"/><path d="M3 5V3h2M11 7v2H9" fill="none" stroke="#5c5e60" stroke-width="1"/></svg>
</div>
<!--EMU_END-->
<div class="a" style="left:0;top:0;width:1607px;height:1050px;border-radius:10px;box-shadow:0 0 0 30px #17112e;pointer-events:none"></div>
</div></body></html>
